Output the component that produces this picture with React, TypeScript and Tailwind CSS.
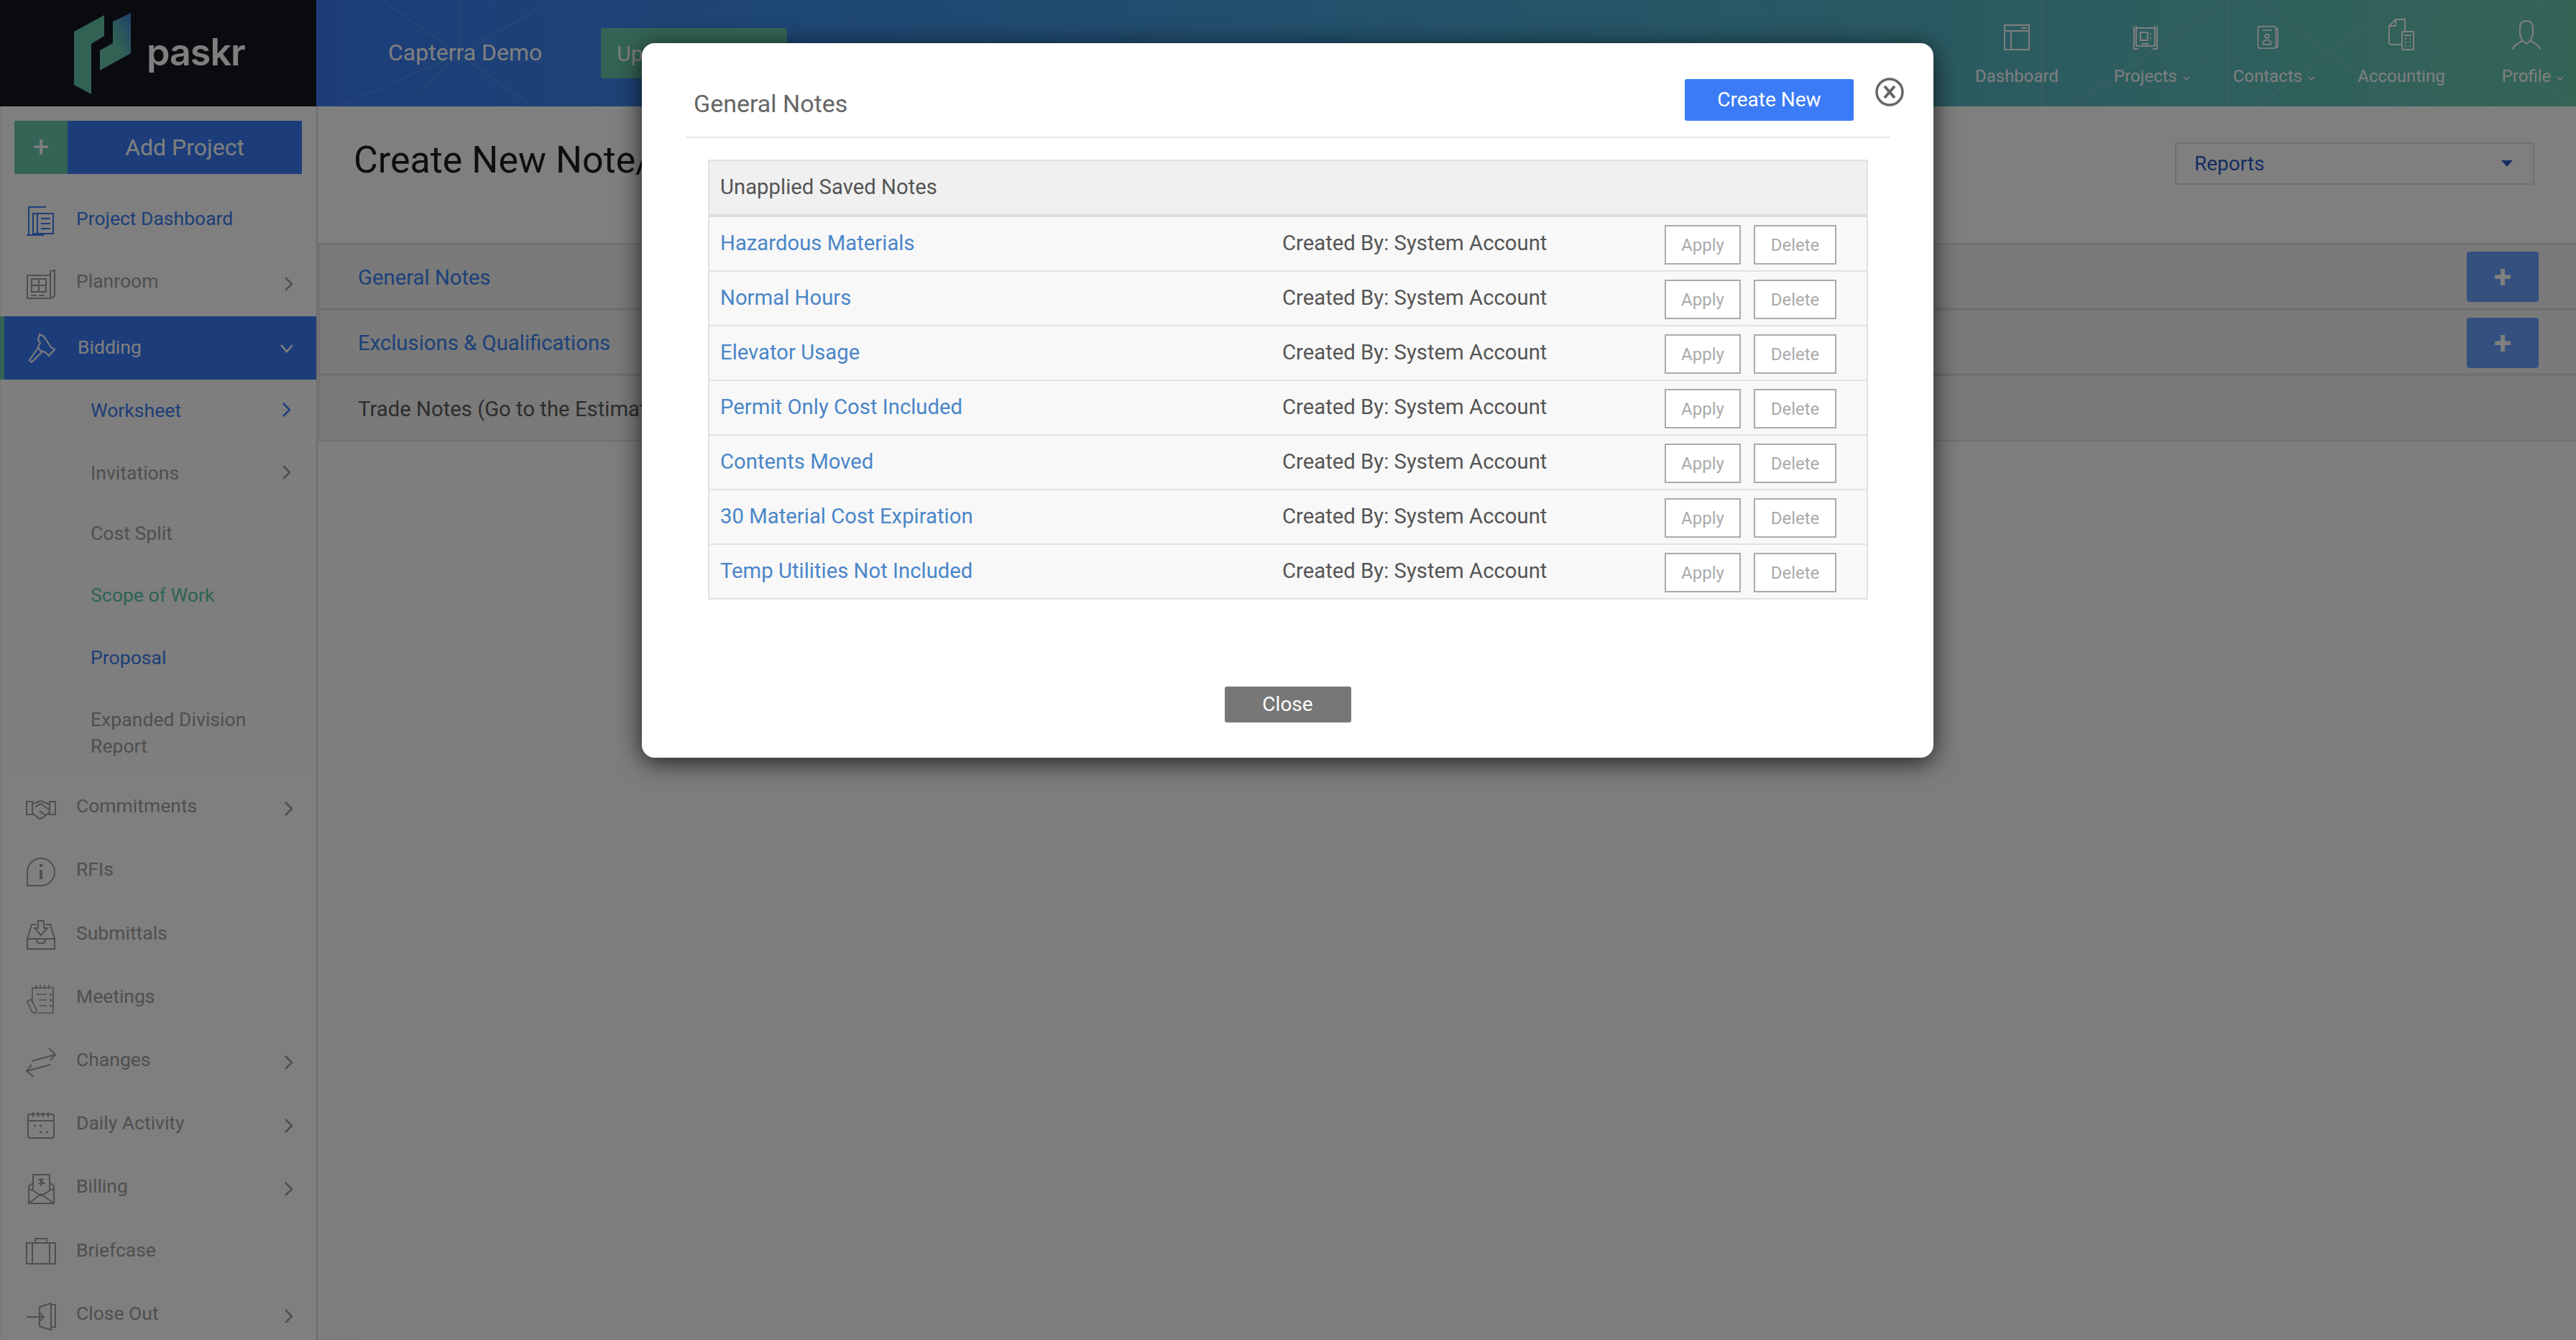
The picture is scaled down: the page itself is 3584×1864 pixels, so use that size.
import type { ReactNode } from "react";

const NOTES = [
  "Hazardous Materials",
  "Normal Hours",
  "Elevator Usage",
  "Permit Only Cost Included",
  "Contents Moved",
  "30 Material Cost Expiration",
  "Temp Utilities Not Included",
];

function Icon({ children, w = 42, h = 42 }: { children: ReactNode; w?: number; h?: number }) {
  return (
    <svg width={w} height={h} viewBox="0 0 42 42" fill="none" stroke="currentColor" strokeWidth="2">
      {children}
    </svg>
  );
}

function Chevron({ down = false, className = "" }: { down?: boolean; className?: string }) {
  return (
    <svg width="22" height="22" viewBox="0 0 22 22" fill="none" stroke="currentColor" strokeWidth="2.6" className={className}>
      <path d={down ? "M3 7l8 9 8-9" : "M7 2l9 9-9 9"} />
    </svg>
  );
}

const sideIcons: Record<string, ReactNode> = {
  dashboard: (
    <Icon>
      <path d="M1 40h24M4 40V1h24M4 1h-1" />
      <path d="M10 10h28v28H10z" />
      <path d="M16 10v28M21 17h13M21 24h13M21 31h13" />
    </Icon>
  ),
  planroom: (
    <Icon>
      <path d="M2 9h32v32H2zM34 9V3l6-1v36l-6 3" />
      <path d="M8 14h20v18H8zM18 14v18M8 23h20" />
      <path d="M7 37h8M18 37h8" />
    </Icon>
  ),
  bidding: (
    <Icon>
      <path d="M17 2l6 3 10 15 5 3-8 9-5-5-7-2-3-6 3-5-3-4z" />
      <path d="M15 21L3 38l3 3 15-15" />
    </Icon>
  ),
  commitments: (
    <Icon>
      <path d="M1 11h8v18H1zM33 11h8v18h-8zM9 14l12-4 12 5v11l-9 7-5 2-10-8" />
      <path d="M13 18l8-4 12 9M19 24l8 6" />
    </Icon>
  ),
  rfis: (
    <Icon>
      <path d="M2 40V21a19 19 0 1 1 19 19z" />
      <path d="M21 18v13" strokeWidth="4" />
      <path d="M21 10v4" strokeWidth="4" />
    </Icon>
  ),
  submittals: (
    <Icon>
      <path d="M2 26h38v14H2zM2 26l6-20h7M40 26l-6-20h-7" />
      <path d="M14 26l3 6h8l3-6" />
      <path d="M17 1h8v10h5l-9 10-9-10h5z" />
    </Icon>
  ),
  meetings: (
    <Icon>
      <path d="M9 27V5h29v35H16" strokeWidth="1.6" />
      <path d="M14 1v6M20 1v6M26 1v6M32 1v6M15 14h14M18 22h11M19 30h10M33 13l2 2 2-2M33 21l2 2 2-2M33 29l2 2 2-2" strokeWidth="1.6" />
      <path d="M2 24l5-3 8 14-2 6-5-3z" strokeWidth="1.6" />
    </Icon>
  ),
  changes: (
    <Icon>
      <path d="M8 19L41 10M32 1l9 9-7 8M1 33l33-9M11 41l-10-8 7-9" />
    </Icon>
  ),
  daily: (
    <Icon>
      <rect x="3" y="5" width="36" height="33" rx="3" />
      <path d="M3 14h36M10 2v7M17 2v7M24 2v7M31 2v7" />
      <path d="M11 21h3M19 21h3M19 30h3M28 30h3" strokeWidth="2.6" />
    </Icon>
  ),
  billing: (
    <Icon>
      <path d="M4 17v24h35V17L22 4z" />
      <path d="M4 41l17-13 18 13M4 20l17 10 18-10" />
      <path d="M10 22V1h23v21M21 6v11M25 8h-6l6 5h-7" fill="#fff" />
    </Icon>
  ),
  briefcase: (
    <Icon>
      <path d="M1 8h40v29H1zM13 8V2h16v6M9 8v29M33 8v29" />
    </Icon>
  ),
  closeout: (
    <Icon>
      <path d="M19 8l16-5v37l-16-5zM35 5h6v31h-6M1 22h24M18 15l7 7-7 7" />
    </Icon>
  ),
};

const topItems: { label: string; caret?: boolean; icon: ReactNode; w: number }[] = [
  {
    label: "Dashboard",
    w: 180,
    icon: (
      <svg width="36" height="36" viewBox="0 0 36 36" fill="none" stroke="currentColor" strokeWidth="2">
        <path d="M1 1h34v34H1zM1 9h34M10 9v26M24 5h8" />
      </svg>
    ),
  },
  {
    label: "Projects",
    caret: true,
    w: 178,
    icon: (
      <svg width="36" height="36" viewBox="0 0 36 36" fill="none" stroke="currentColor" strokeWidth="2">
        <path d="M5 2v28M31 2v28M5 5h26M5 30h26M2 3v31h6M34 3v31h-6" />
        <path d="M11 11h10v11H11zM24 13h2M24 19h2M13 27h10" />
      </svg>
    ),
  },
  {
    label: "Contacts",
    caret: true,
    w: 162,
    icon: (
      <svg width="32" height="36" viewBox="0 0 36 36" fill="none" stroke="currentColor" strokeWidth="2">
        <rect x="3" y="1" width="28" height="34" rx="3" />
        <path d="M31 4c3 0 3 2 3 4v22c0 2-1 4-3 4M10 7h14" />
        <circle cx="17" cy="16" r="3" />
        <path d="M11 29v-4l4-3h4l4 3v4z" />
      </svg>
    ),
  },
  {
    label: "Accounting",
    w: 210,
    icon: (
      <svg width="36" height="44" viewBox="0 0 36 44" fill="none" stroke="currentColor" strokeWidth="2">
        <path d="M18 36H3a2 2 0 0 1-2-2V10L10 1h13v16M10 1v9H1" />
        <rect x="19" y="18" width="16" height="25" rx="1" />
        <path d="M22 23h10M23 28h2M29 28h2M23 33h2M29 33h2M23 38h2M29 38h2" />
      </svg>
    ),
  },
  {
    label: "Profile",
    caret: true,
    w: 138,
    icon: (
      <svg width="40" height="42" viewBox="0 0 40 42" fill="none" stroke="currentColor" strokeWidth="2">
        <path d="M20 1c-6 0-9 4-9 10v8c0 4 3 6 3 9 0 3-13 5-13 13M20 1c6 0 9 4 9 10v8c0 4-3 6-3 9 0 3 13 5 13 13" />
        <path d="M14 28l6 5 6-5" />
      </svg>
    ),
  },
];

function SideRow({
  label,
  icon,
  arrow = false,
  h = 88.2,
  color = "text-[#9e9e9e]",
}: {
  label: string;
  icon: string;
  arrow?: boolean;
  h?: number;
  color?: string;
}) {
  return (
    <div className={`flex shrink-0 items-center pl-[34px] pr-[28px] ${color}`} style={{ height: h }}>
      <span className="mt-[8px] flex w-[70px] shrink-0">{sideIcons[icon]}</span>
      <span className="flex-1 text-[26.5px]">{label}</span>
      {arrow && <Chevron className="mt-[8px]" />}
    </div>
  );
}

function SubRow({
  label,
  h,
  arrow = false,
  color = "text-[#9e9e9e]",
}: {
  label: string;
  h: number;
  arrow?: boolean;
  color?: string;
}) {
  return (
    <div className={`flex items-center pl-[124px] pr-[31px] ${color}`} style={{ height: h }}>
      <span className="flex-1 text-[26.6px] leading-[37px]">{label}</span>
      {arrow && <Chevron />}
    </div>
  );
}

function Sidebar() {
  return (
    <aside className="flex w-[442px] shrink-0 flex-col border-r-2 border-r-[#d8d8d8] border-l-2 border-l-[#f2f2f2] bg-white">
      <div className="ml-[18px] mr-[20px] mt-[20px] flex h-[74px] shrink-0 text-white">
        <div className="flex w-[74px] items-center justify-center bg-[#68c8ac] text-[40px]">+</div>
        <div className="flex flex-1 items-center justify-center bg-[#387af4] text-[32px]">Add Project</div>
      </div>
      <div className="mt-[18px] shrink-0">
        <SideRow label="Project Dashboard" icon="dashboard" h={88} color="text-[#3b7cf0]" />
        <SideRow label="Planroom" icon="planroom" h={86} arrow />
      </div>
      <div className="-ml-[2px] mt-[6px] flex h-[88px] shrink-0 items-center border-l-[6px] border-l-[#68c8ac] bg-[#387af4] pl-[32px] pr-[30px] text-white">
        <span className="flex w-[70px] shrink-0">{sideIcons.bidding}</span>
        <span className="-mt-[2px] flex-1 text-[26.5px]">Bidding</span>
        <Chevron down />
      </div>
      <div className="shrink-0 bg-[#fdfdfd]">
        <SubRow label="Worksheet" h={84} arrow color="text-[#3b7cf0]" />
        <SubRow label="Invitations" h={90} arrow />
        <SubRow label="Cost Split" h={78} />
        <SubRow label="Scope of Work" h={94} color="text-[#5cc8a8]" />
        <SubRow label="Proposal" h={80} color="text-[#3b7cf0]" />
        <div className="pt-[7px]">
          <SubRow label="Expanded Division Report" h={116} />
        </div>
      </div>
      <SideRow label="Commitments" icon="commitments" arrow />
      <SideRow label="RFIs" icon="rfis" />
      <SideRow label="Submittals" icon="submittals" />
      <SideRow label="Meetings" icon="meetings" />
      <SideRow label="Changes" icon="changes" arrow />
      <SideRow label="Daily Activity" icon="daily" arrow />
      <SideRow label="Billing" icon="billing" arrow />
      <SideRow label="Briefcase" icon="briefcase" />
      <SideRow label="Close Out" icon="closeout" arrow />
    </aside>
  );
}

function Header() {
  return (
    <header className="flex h-[148px] shrink-0">
      <div className="flex w-[440px] shrink-0 items-center bg-[#14161f] pl-[103px]">
        <svg width="79" height="113" viewBox="103 17 79 113">
          <defs>
            <linearGradient id="logoRight" x1="0" y1="1" x2="1" y2="0">
              <stop offset="0.5" stopColor="#64c4a8" />
              <stop offset="1" stopColor="#3f80d8" />
            </linearGradient>
          </defs>
          <polygon points="103,43 145,20 145,49 127,60 127,130 103,117" fill="#64c4a8" />
          <polygon points="139,69 157,59 157,29 182,17 182,73 139,97" fill="url(#logoRight)" />
        </svg>
        <span className="-mt-[2px] ml-[22px] text-[52px] font-semibold leading-none tracking-[-1px] text-white [font-family:Inter,sans-serif]">paskr</span>
      </div>
      <div className="relative flex flex-1 items-center bg-gradient-to-r from-[#387af4] to-[#68c8ac] pl-[100px] text-white">
        <svg className="absolute inset-0 h-full w-full opacity-[0.07]" viewBox="0 0 3144 148" fill="none" stroke="#fff" strokeWidth="3">
          <path d="M200 75L30 148M200 75L90 0M200 75L200 0M200 75L330 0M200 75L300 148M200 75L120 148M2440 148L2660 0M2700 0L2900 148L3100 0M2700 148L2900 0L3144 148M2400 0v148M2660 0v148" />
        </svg>
        <span className="relative -mt-[2px] text-[32px]">Capterra Demo</span>
        <div className="relative ml-[82px] flex h-[70px] w-[259px] items-center rounded-[4px] bg-[#68c8ac] pl-[22px] text-[30px]">Upgrade</div>
        <nav className="relative ml-auto flex self-start pt-[26px]">
          {topItems.map((item) => (
            <div key={item.label} className="flex flex-col items-center" style={{ width: item.w }}>
              <div className="flex h-[44px] items-end">{item.icon}</div>
              <div className="relative mt-[19px] text-[24px] leading-[34px]">
                {item.label}
                {item.caret && (
                  <svg className="absolute -right-[18px] top-[17px]" width="10" height="7" viewBox="0 0 10 7" fill="none" stroke="currentColor" strokeWidth="1.5">
                    <path d="M1 1l4 4 4-4" />
                  </svg>
                )}
              </div>
            </div>
          ))}
        </nav>
      </div>
    </header>
  );
}

function Accordion({
  label,
  h,
  plus = true,
  link = true,
  border = "border-b-[4px]",
}: {
  label: string;
  h: number;
  plus?: boolean;
  link?: boolean;
  border?: string;
}) {
  return (
    <div className={`ml-[1px] flex items-center justify-between border-l-2 border-l-[#dedede] ${border} border-b-[#dedede] bg-[#f5f5f5] pl-[53px] pr-[52px]`} style={{ height: h }}>
      <span className={`mt-[5px] text-[29.3px] ${link ? "text-[#3b82f0]" : "text-[#5a5a5a]"}`}>{label}</span>
      {plus && (
        <div className="mt-[2px] flex h-[70px] w-[100px] items-center justify-center rounded-[4px] bg-[#66a0ff] text-[44px] font-bold text-white">+</div>
      )}
    </div>
  );
}

function Main() {
  return (
    <main className="flex flex-1 flex-col bg-[#fbfbfb]">
      <div className="flex h-[190px] shrink-0 items-start justify-between bg-white pl-[50px] pr-[58px]">
        <h1 className="mt-[42px] text-[52px] leading-[66px] text-[#1c1c1c]">Create New Note/Exclusion</h1>
        <div className="mt-[50px] flex h-[59px] w-[500px] items-center justify-between rounded-[3px] border-2 border-[#e0e0e0] pl-[25px] pr-[28px] text-[28px] text-[#2d5bc4]">
          Reports
          <span className="h-0 w-0 border-x-[8px] border-t-[9px] border-x-transparent border-t-[#2d5bc4]" />
        </div>
      </div>
      <div className="flex-1 border-t-[2px] border-t-[#dedede]">
        <Accordion label="General Notes" h={92} />
        <Accordion label="Exclusions & Qualifications" h={91} />
        <Accordion label="Trade Notes (Go to the Estimating tab to edit)" h={91} plus={false} link={false} border="border-b-2" />
      </div>
    </main>
  );
}

function NotesModal() {
  return (
    <div className="absolute left-[893px] top-[60px] flex h-[994px] w-[1797px] flex-col rounded-[18px] bg-white px-[61px] shadow-[0_6px_34px_rgba(0,0,0,0.75)]">
      <div className="relative flex h-[132px] shrink-0 items-end justify-between border-b-2 border-b-[#e5e5e5] pb-[22px] pl-[11px] pr-[50px]">
        <h2 className="mb-[2px] text-[34px] leading-[44px] text-[#666]">General Notes</h2>
        <button className="h-[58px] w-[235px] rounded-[3px] bg-[#3b7cf6] text-[28px] text-white">Create New</button>
        <svg className="absolute -right-[20px] top-[48px]" width="40" height="40" viewBox="0 0 40 40" fill="none" stroke="#666" strokeWidth="3.5">
          <circle cx="20" cy="20" r="18" />
          <path d="M13 12l14 16M27 12L13 28" strokeWidth="4" />
        </svg>
      </div>
      <div className="ml-[31px] mr-[30px] mt-[30px] border-x-2 border-t-[2px] border-[#e2e2e2]">
        <div className="flex h-[78px] items-center border-b-[4px] border-b-[#dcdcdc] bg-[#f0f0f0] pl-[15px] text-[29.3px] text-[#555]">
          Unapplied Saved Notes
        </div>
        {NOTES.map((note) => (
          <div key={note} className="flex h-[76px] items-center border-b-2 border-b-[#e2e2e2] bg-[#f8f8f8] pl-[15px] text-[29.3px]">
            <a className="w-[782px] shrink-0 text-[#4a86c8]">{note}</a>
            <span className="w-[532px] shrink-0 text-[#555]">Created By: System Account</span>
            <button className="mt-[3px] h-[55px] w-[106px] border-2 border-[#aaa] bg-white text-[24px] text-[#aaa]">Apply</button>
            <button className="ml-[18px] mt-[3px] h-[55px] w-[115px] border-2 border-[#aaa] bg-white text-[24px] text-[#aaa]">Delete</button>
          </div>
        ))}
      </div>
      <div className="mt-[121px] flex justify-center">
        <button className="h-[50px] w-[176px] rounded-[3px] bg-[#777] text-[28px] text-white">Close</button>
      </div>
    </div>
  );
}

export default function App() {
  return (
    <div className="relative flex h-[1864px] w-[3584px] flex-col overflow-hidden [font-family:Roboto,sans-serif]">
      <Header />
      <div className="flex flex-1 overflow-hidden">
        <Sidebar />
        <Main />
      </div>
      <div className="absolute inset-0 bg-black/50" />
      <NotesModal />
    </div>
  );
}
